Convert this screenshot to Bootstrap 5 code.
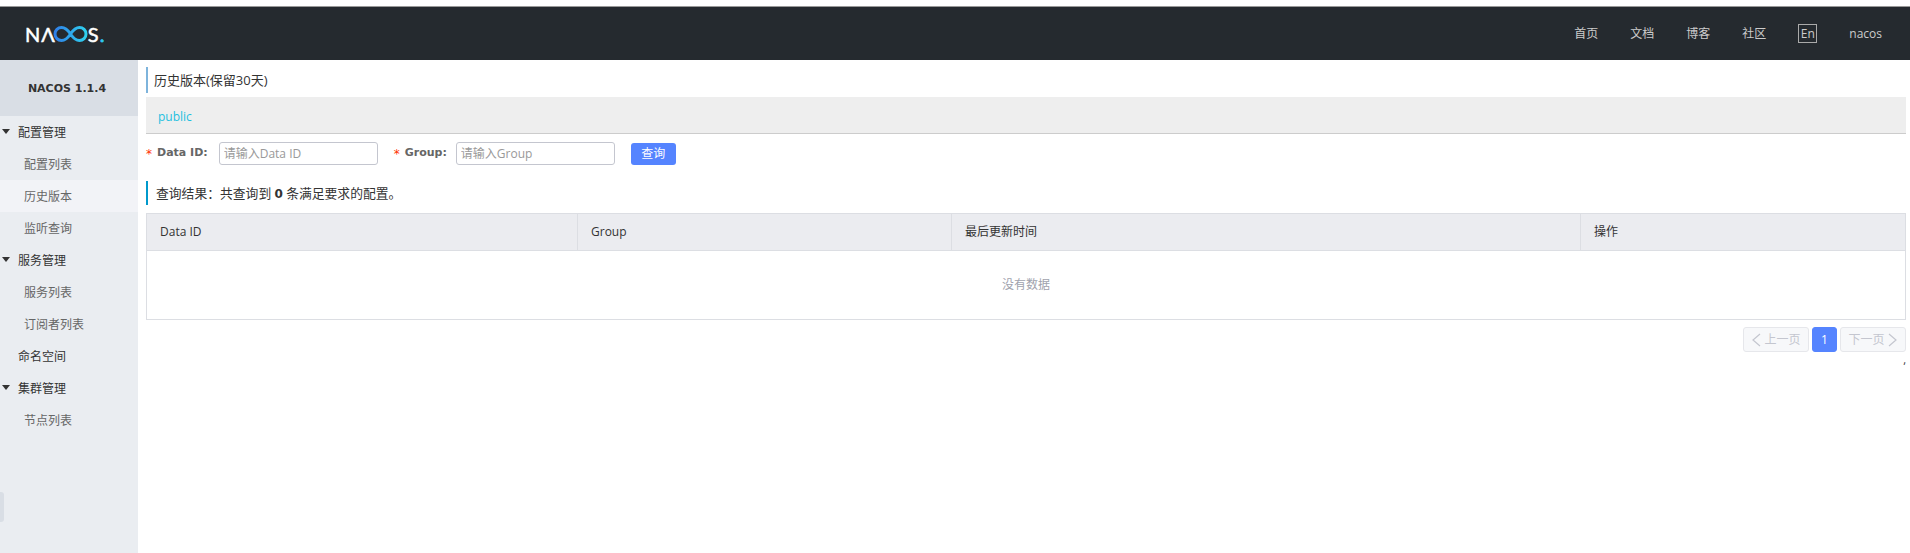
<!DOCTYPE html>
<html lang="zh">
<head>
<meta charset="utf-8">
<title>Nacos</title>
<link href="https://cdn.jsdelivr.net/npm/bootstrap@5.3.0/dist/css/bootstrap.min.css" rel="stylesheet">
<style>
html,body{height:553px;overflow:hidden;background:#fff}
body{font-family:"Open Sans","Noto Sans CJK SC",sans-serif;font-size:12px;color:#333;padding-top:6px}
.topbar{height:54px;background:#252a2f;border-top:1px solid #999;padding:0 28px 0 25px}
.brand{font-family:Lato,sans-serif;font-size:20px;line-height:1;font-weight:400;color:#fff;letter-spacing:1px;-webkit-text-stroke:.5px #fff}
.brand svg{margin:0 0 0 -3px}
.brand-dot{color:#2fc6ef;letter-spacing:0;-webkit-text-stroke:.8px #2fc6ef}
.toplink{color:#ccc;text-decoration:none;font-size:12px}
.lang{border:1px solid #aaa;width:19px;height:19px;line-height:17px;text-align:center;display:block}
.shell{height:493px}
.side{width:138px;flex:none;background:#eaedf1;position:relative}
.ver{height:56px;padding:2px 4px 0 0;background:#d9dee5;font-family:"DejaVu Sans",sans-serif;font-weight:700;font-size:11px;color:#333}
.menu-row{height:32px;padding-top:2px;display:flex;align-items:center;color:#333;padding-left:18px;position:relative}
.menu-sub{padding-left:24px;color:#666}
.menu-on{background:#f2f3f7}
.caret-mark{position:absolute;left:2px;top:13px;width:0;height:0;border:4px solid transparent;border-top:5px solid #333;border-bottom:0}
.grip{position:absolute;left:0;top:432px;width:4px;height:30px;background:#d9dee5;border-radius:0 3px 3px 0}
.content{flex:1;min-width:0;padding:7px 4px 0 8px}
.page-title{height:26px;border-left:2px solid #7eb4dc;padding-left:6px;line-height:27px;font-size:13px}
.ns-bar{height:37px;margin-top:4px;background:#eee;border-bottom:1px solid #ccc;padding-left:12px;line-height:40px;color:#1fc0e0}
.query{height:23px;margin-top:8px}
.req{color:#ff3000;font-family:"DejaVu Sans",sans-serif;margin-right:5px;font-size:12px}
.qlabel{font-family:"DejaVu Sans",sans-serif;font-weight:700;font-size:11px;color:#666;margin-right:11px;white-space:nowrap}
.qlabel-tight{margin-right:9px}
.qinput{width:159px;height:23px;border:1px solid #c4c6cf;border-radius:3px;padding:0 4px;font-size:12px;margin-right:16px;color:#333;box-shadow:none}
.qinput::placeholder{color:#999}
.qbtn{width:45px;height:22px;padding:0;background:#5584ff;border:0;border-radius:3px;color:#fff;font-size:12px;line-height:22px}
.result{height:24px;margin-top:16px;border-left:2px solid #09c;padding-left:8px;line-height:24px;font-size:12.800px}
.result b{font-family:"DejaVu Sans",sans-serif;font-size:12px}
.grid-table{margin:8px 0 0;table-layout:fixed;width:100%;border:1px solid #dcdee3;font-size:12px;color:#333;border-collapse:collapse}
.grid-table th{background:#ebecf0;font-weight:400;height:37px;padding:0 13px;vertical-align:middle;border:0;border-bottom:1px solid #dcdee3;border-right:1px solid #dcdee3}
.grid-table td{height:69px;padding:0;text-align:center;color:#a0a2ad;vertical-align:middle;border:0}
.pager{margin-top:7px;gap:3px}
.pbtn{height:25px;width:66px;background:#f7f8fa;border:1px solid #e6e7eb;border-radius:3px;color:#c4c6cf;display:flex;align-items:center;justify-content:center;gap:2px}
.pnum{width:25px;background:#5584ff;border-color:#5584ff;color:#fff}
.tail{text-align:right;font-size:11px;line-height:14px;margin-top:1px}
</style>
</head>
<body>
<nav class="topbar d-flex align-items-center justify-content-between">
  <div class="brand d-flex align-items-center" aria-label="NACOS">
    <span>NΛ</span>
    <svg width="35" height="16" viewBox="0 0 35 16">
      <defs><linearGradient id="lg" x1="0" x2="1"><stop offset="0" stop-color="#2f7fe8"/><stop offset="1" stop-color="#2fd0ef"/></linearGradient></defs>
      <path d="M17.5 8C14.5 3.5 12 1.5 8.5 1.5A6.5 6.5 0 0 0 8.5 14.500C12 14.500 14.5 12.500 17.500 8C20.500 3.500 23 1.500 26.500 1.500A6.500 6.500 0 0 1 26.500 14.500C23 14.500 20.500 12.500 17.500 8Z" fill="none" stroke="url(#lg)" stroke-width="3"/>
    </svg>
    <span>S</span><span class="brand-dot">.</span>
  </div>
  <div class="d-flex align-items-center" style="gap:32px">
    <a class="toplink" href="#">首页</a>
    <a class="toplink" href="#">文档</a>
    <a class="toplink" href="#">博客</a>
    <a class="toplink" href="#">社区</a>
    <a class="toplink lang" href="#">En</a>
    <a class="toplink" href="#">nacos</a>
  </div>
</nav>
<div class="shell d-flex">
  <aside class="side">
    <div class="ver d-flex align-items-center justify-content-center">NACOS 1.1.4</div>
    <div class="menu-row"><i class="caret-mark"></i>配置管理</div>
    <div class="menu-row menu-sub">配置列表</div>
    <div class="menu-row menu-sub menu-on">历史版本</div>
    <div class="menu-row menu-sub">监听查询</div>
    <div class="menu-row"><i class="caret-mark"></i>服务管理</div>
    <div class="menu-row menu-sub">服务列表</div>
    <div class="menu-row menu-sub">订阅者列表</div>
    <div class="menu-row">命名空间</div>
    <div class="menu-row"><i class="caret-mark"></i>集群管理</div>
    <div class="menu-row menu-sub">节点列表</div>
    <div class="grip"></div>
  </aside>
  <main class="content">
    <div class="page-title">历史版本(保留30天)</div>
    <div class="ns-bar">public</div>
    <form class="query d-flex align-items-center">
      <span class="req">*</span><label class="qlabel">Data ID:</label>
      <input class="form-control qinput" placeholder="请输入Data ID">
      <span class="req">*</span><label class="qlabel qlabel-tight">Group:</label>
      <input class="form-control qinput" placeholder="请输入Group">
      <button type="button" class="btn qbtn">查询</button>
    </form>
    <div class="result">查询结果：共查询到 <b>0</b> 条满足要求的配置。</div>
    <table class="table grid-table">
      <colgroup><col style="width:431px"><col style="width:374px"><col style="width:629px"><col></colgroup>
      <thead><tr><th>Data ID</th><th>Group</th><th>最后更新时间</th><th>操作</th></tr></thead>
      <tbody><tr><td colspan="4">没有数据</td></tr></tbody>
    </table>
    <div class="pager d-flex justify-content-end">
      <div class="pbtn"><svg width="11" height="14" viewBox="0 0 11 14"><path d="M9 1 2 7l7 6" fill="none" stroke="#c4c6cf" stroke-width="1.200"/></svg>上一页</div>
      <div class="pbtn pnum">1</div>
      <div class="pbtn">下一页<svg width="11" height="14" viewBox="0 0 11 14"><path d="M2 1l7 6-7 6" fill="none" stroke="#c4c6cf" stroke-width="1.200"/></svg></div>
    </div>
    <div class="tail">,</div>
  </main>
</div>
</body>
</html>
